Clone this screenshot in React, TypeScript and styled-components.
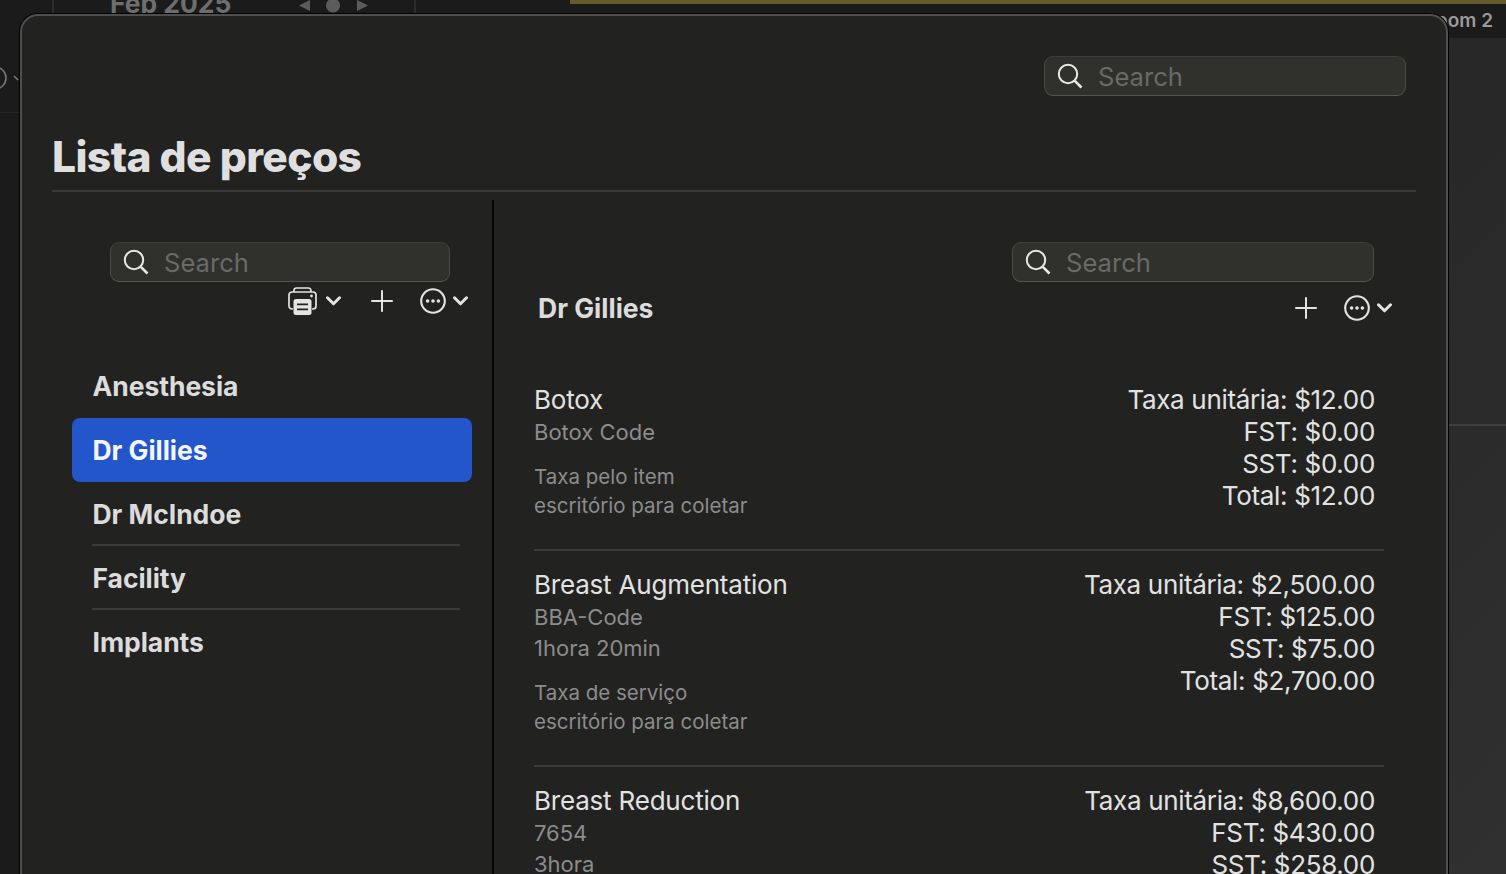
import React from "react";
import styled, { createGlobalStyle } from "styled-components";

const Global = createGlobalStyle`
  html, body { margin: 0; padding: 0; height: 100%; overflow: hidden; background: #1b1b1b; }
  * { box-sizing: border-box; }
  #root { height: 100%; }
  body { font-family: Inter, "Liberation Sans", sans-serif; }
`;

const Page = styled.div`
  position: relative;
  width: 1506px;
  height: 874px;
  overflow: hidden;
  display: flex;
  flex-direction: column;
  background: #1b1b1b;
`;
const BackTop = styled.div`
  height: 38px;
  display: flex;
  position: relative;
`;
const BackLeftCol = styled.div`
  width: 54px;
  border-right: 2px solid #2c2c2c;
`;
const MonthCell = styled.div`
  width: 362px;
  padding-left: 56px;
  display: flex;
  align-items: flex-start;
  color: #6e6e6e;
  font-size: 26.4px;
  font-weight: 700;
  line-height: 26px;
  height: 38px;
  white-space: nowrap;
  border-right: 2px solid #2c2c2c;
  overflow: hidden;
`;
const MonthText = styled.span`
  margin-top: -10px;
`;
const MonthNav = styled.svg`
  margin-left: 67px;
  flex: none;
`;
const GoldWrap = styled.div`
  flex: 1;
  margin-left: 154px;
  position: relative;
`;
const GoldBar = styled.div`
  height: 4px;
  background: #655a2b;
`;
const RoomLabel = styled.div`
  position: absolute;
  right: 13px;
  top: 9px;
  font-size: 19px;
  line-height: 24px;
  font-weight: 600;
  color: #9a9a9a;
`;
const BackBody = styled.div`
  flex: 1;
  display: flex;
  justify-content: space-between;
`;
const BackSide = styled.div`
  width: 20px;
  color: #777;
  padding-top: 29px;
  border-bottom: 1px solid #262626;
  height: 75px;
`;
const BackSideIcon = styled.svg`
  display: block;
`;
const BackRight = styled.div`
  width: 58px;
  background: linear-gradient(135deg, #272727, #303030);
  display: flex;
  flex-direction: column;
`;
const BackRightCell = styled.div`
  height: 388px;
  border-bottom: 2px solid #3f3f3f;
`;

const Modal = styled.div`
  position: absolute;
  left: 20px;
  top: 14px;
  width: 1428px;
  height: 900px;
  background: #222221;
  border: 2px solid #4f4f4f;
  border-radius: 18px;
  box-shadow: 0 0 0 1px #000;
  padding: 40px 30px 0 30px;
  display: flex;
  flex-direction: column;
`;
const TopSearchRow = styled.div`
  display: flex;
  justify-content: flex-end;
  padding-right: 10px;
`;
const SearchBox = styled.div<{ $w: number }>`
  width: ${(p) => p.$w}px;
  height: 40px;
  flex: none;
  border-radius: 9px;
  background: #30312d;
  border: 1px solid #4a4b47;
  border-top-color: #3d3e3a;
  border-bottom-color: #555652;
  display: flex;
  align-items: center;
  padding-left: 12px;
  gap: 15px;
  font-size: 25.6px;
  color: #696a67;
`;
const SearchLabel = styled.span`
  line-height: 32px;
  padding-top: 1px;
`;
const SearchIconWrap = styled.svg`
  flex: none;
  color: #e8e8e8;
`;
const Title = styled.h1`
  margin: 32px 0 0 0;
  height: 64px;
  font-size: 42.5px;
  line-height: 58px;
  font-weight: 800;
  letter-spacing: -0.6px;
  color: #dfdfdf;
  border-bottom: 2px solid #393939;
`;
const Columns = styled.div`
  flex: 1;
  display: flex;
  margin-top: 8px;
  min-height: 0;
`;
const Sidebar = styled.aside`
  width: 442px;
  flex: none;
  border-right: 2px solid #050505;
  padding: 42px 20px 0 20px;
  display: flex;
  flex-direction: column;
`;
const SidebarSearchRow = styled.div`
  padding-left: 38px;
`;
const Tools = styled.div`
  display: flex;
  align-items: center;
  justify-content: flex-end;
  height: 38px;
  color: #e4e4e4;
`;
const SideTools = styled(Tools)`
  margin-right: 4px;
`;
const ToolSvg = styled.svg<{ $gap?: number }>`
  flex: none;
  margin-left: ${(p) => p.$gap ?? 0}px;
  display: block;
`;
const SideList = styled.ul`
  list-style: none;
  margin: 34px 0 0 0;
  padding: 0;
`;
const SideItem = styled.li<{ $active?: boolean; $line?: boolean }>`
  position: relative;
  height: 64px;
  width: 400px;
  display: flex;
  align-items: center;
  padding-left: 20.5px;
  border-radius: 8px;
  font-size: 26.5px;
  font-weight: 700;
  letter-spacing: -0.05px;
  color: ${(p) => (p.$active ? "#f4f6fb" : "#dcdcdc")};
  background: ${(p) => (p.$active ? "#2356cb" : "transparent")};
  &::after {
    content: "";
    display: ${(p) => (p.$line ? "block" : "none")};
    position: absolute;
    left: 20px;
    right: 12px;
    bottom: 0;
    height: 2px;
    background: #3b3b3b;
  }
`;
const Detail = styled.section`
  flex: 1;
  min-width: 0;
  padding: 42px 32px 0 40px;
  display: flex;
  flex-direction: column;
`;
const DetailSearchRow = styled.div`
  display: flex;
  justify-content: flex-end;
  padding-right: 10px;
`;
const DetailHead = styled.div`
  display: flex;
  align-items: center;
  justify-content: space-between;
  height: 54px;
  margin-top: 7px;
  margin-bottom: 39px;
  padding: 0 0 0 4px;
`;
const DetailTitle = styled.h2`
  margin: 0;
  font-size: 26.5px;
  line-height: 32px;
  font-weight: 700;
  letter-spacing: 0;
  color: #dcdcdc;
`;
const HeadTools = styled(Tools)`
  margin-right: -8px;
`;
const Entry = styled.article`
  display: flex;
  justify-content: space-between;
  padding-right: 9px;
  border-bottom: 2px solid #3b3b3b;
  padding-top: 18px;
  padding-bottom: 29px;
  &:last-child { border-bottom: none; }
`;
const EntryMain = styled.div`
  display: flex;
  flex-direction: column;
`;
const EntryName = styled.div`
  font-size: 26px;
  line-height: 32px;
  margin-bottom: 1px;
  color: #e2e2e2;
  letter-spacing: -0.2px;
`;
const Sub = styled.div`
  font-size: 22px;
  line-height: 31px;
  color: #8c8c8c;
`;
const NoteBlock = styled.div`
  margin-top: 14px;
  font-size: 20.5px;
  line-height: 29px;
  color: #8c8c8c;
`;
const Prices = styled.div`
  text-align: right;
  font-size: 26px;
  line-height: 32px;
  color: #e2e2e2;
  letter-spacing: -0.33px;
`;

const SearchIcon = () => (
  <SearchIconWrap width="26" height="26" viewBox="0 0 26 26" fill="none" stroke="currentColor">
    <circle cx="11" cy="11" r="9.2" strokeWidth="2" />
    <path d="M17.8 17.8 L24.5 24.5" strokeWidth="2.6" />
  </SearchIconWrap>
);
const Search = ({ w }: { w: number }) => (
  <SearchBox $w={w}>
    <SearchIcon />
    <SearchLabel>Search</SearchLabel>
  </SearchBox>
);
const Chevron = ({ gap }: { gap: number }) => (
  <ToolSvg $gap={gap} width="15" height="10" viewBox="0 0 15 10" fill="none" stroke="currentColor">
    <path d="M1.5 1.8 L7.5 7.8 L13.5 1.8" strokeWidth="3" strokeLinecap="round" strokeLinejoin="round" />
  </ToolSvg>
);
const Plus = ({ gap }: { gap: number }) => (
  <ToolSvg $gap={gap} width="22" height="22" viewBox="0 0 22 22" fill="none" stroke="currentColor">
    <path d="M11 1 V21 M1 11 H21" strokeWidth="2" strokeLinecap="round" />
  </ToolSvg>
);
const More = ({ gap }: { gap: number }) => (
  <ToolSvg $gap={gap} width="26" height="26" viewBox="0 0 26 26" fill="none" stroke="currentColor">
    <circle cx="13" cy="13" r="11.8" strokeWidth="2.1" />
    <circle cx="7.6" cy="13" r="1.8" fill="currentColor" stroke="none" />
    <circle cx="13" cy="13" r="1.8" fill="currentColor" stroke="none" />
    <circle cx="18.4" cy="13" r="1.8" fill="currentColor" stroke="none" />
  </ToolSvg>
);
const Printer = () => (
  <ToolSvg width="29" height="28" viewBox="0 0 29 28" fill="none" stroke="currentColor">
    <path d="M6 5 V3.5 A2.5 2.5 0 0 1 8.5 1 H20.5 A2.5 2.5 0 0 1 23 3.5 V5" strokeWidth="1.6" />
    <path d="M5 22 H4 A3 3 0 0 1 1 19 V8 A3 3 0 0 1 4 5 H25 A3 3 0 0 1 28 8 V19 A3 3 0 0 1 25 22 H24" strokeWidth="1.7" />
    <rect x="5.5" y="12" width="18" height="16" rx="2.5" fill="currentColor" stroke="none" />
    <path d="M9 17.3 H20 M9 22.3 H20" stroke="#222221" strokeWidth="1.8" />
    <circle cx="23.5" cy="9" r="1.4" fill="currentColor" stroke="none" />
  </ToolSvg>
);

type Item = { name: string; sub: string[]; note: string[]; prices: string[] };
const items: Item[] = [
  {
    name: "Botox",
    sub: ["Botox Code"],
    note: ["Taxa pelo item", "escritório para coletar"],
    prices: ["Taxa unitária: $12.00", "FST: $0.00", "SST: $0.00", "Total: $12.00"],
  },
  {
    name: "Breast Augmentation",
    sub: ["BBA-Code", "1hora 20min"],
    note: ["Taxa de serviço", "escritório para coletar"],
    prices: ["Taxa unitária: $2,500.00", "FST: $125.00", "SST: $75.00", "Total: $2,700.00"],
  },
  {
    name: "Breast Reduction",
    sub: ["7654", "3hora"],
    note: [],
    prices: ["Taxa unitária: $8,600.00", "FST: $430.00", "SST: $258.00"],
  },
];
const sideItems = ["Anesthesia", "Dr Gillies", "Dr McIndoe", "Facility", "Implants"];

export default function App() {
  return (
    <Page>
      <Global />
      <BackTop>
        <BackLeftCol />
        <MonthCell>
          <MonthText>Feb 2025</MonthText>
          <MonthNav width="70" height="14" viewBox="0 0 70 14" fill="#5c5c5c">
            <path d="M1 5.5 L12 0 V11 Z" />
            <circle cx="35" cy="5.5" r="7" />
            <path d="M70 5.5 L59 0 V11 Z" />
          </MonthNav>
        </MonthCell>
        <GoldWrap>
          <GoldBar />
          <RoomLabel>Room 2</RoomLabel>
        </GoldWrap>
      </BackTop>
      <BackBody>
        <BackSide>
          <BackSideIcon width="20" height="22" viewBox="0 0 20 22" fill="none" stroke="currentColor">
            <circle cx="-5" cy="11" r="11" strokeWidth="1.6" />
            <path d="M14 9 L18 13" strokeWidth="1.6" />
          </BackSideIcon>
        </BackSide>
        <BackRight>
          <BackRightCell />
        </BackRight>
      </BackBody>
      <Modal>
        <TopSearchRow>
          <Search w={362} />
        </TopSearchRow>
        <Title>Lista de preços</Title>
        <Columns>
          <Sidebar>
            <SidebarSearchRow>
              <Search w={340} />
            </SidebarSearchRow>
            <SideTools>
              <Printer />
              <Chevron gap={9} />
              <Plus gap={30} />
              <More gap={27} />
              <Chevron gap={7} />
            </SideTools>
            <SideList>
              {sideItems.map((s, i) => (
                <SideItem key={s} $active={i === 1} $line={i === 2 || i === 3}>
                  {s}
                </SideItem>
              ))}
            </SideList>
          </Sidebar>
          <Detail>
            <DetailSearchRow>
              <Search w={362} />
            </DetailSearchRow>
            <DetailHead>
              <DetailTitle>Dr Gillies</DetailTitle>
              <HeadTools>
                <Plus gap={0} />
                <More gap={27} />
                <Chevron gap={7} />
              </HeadTools>
            </DetailHead>
            {items.map((it) => (
              <Entry key={it.name}>
                <EntryMain>
                  <EntryName>{it.name}</EntryName>
                  {it.sub.map((t) => (
                    <Sub key={t}>{t}</Sub>
                  ))}
                  <NoteBlock>
                    {it.note.map((t) => (
                      <div key={t}>{t}</div>
                    ))}
                  </NoteBlock>
                </EntryMain>
                <Prices>
                  {it.prices.map((t) => (
                    <div key={t}>{t}</div>
                  ))}
                </Prices>
              </Entry>
            ))}
          </Detail>
        </Columns>
      </Modal>
    </Page>
  );
}
